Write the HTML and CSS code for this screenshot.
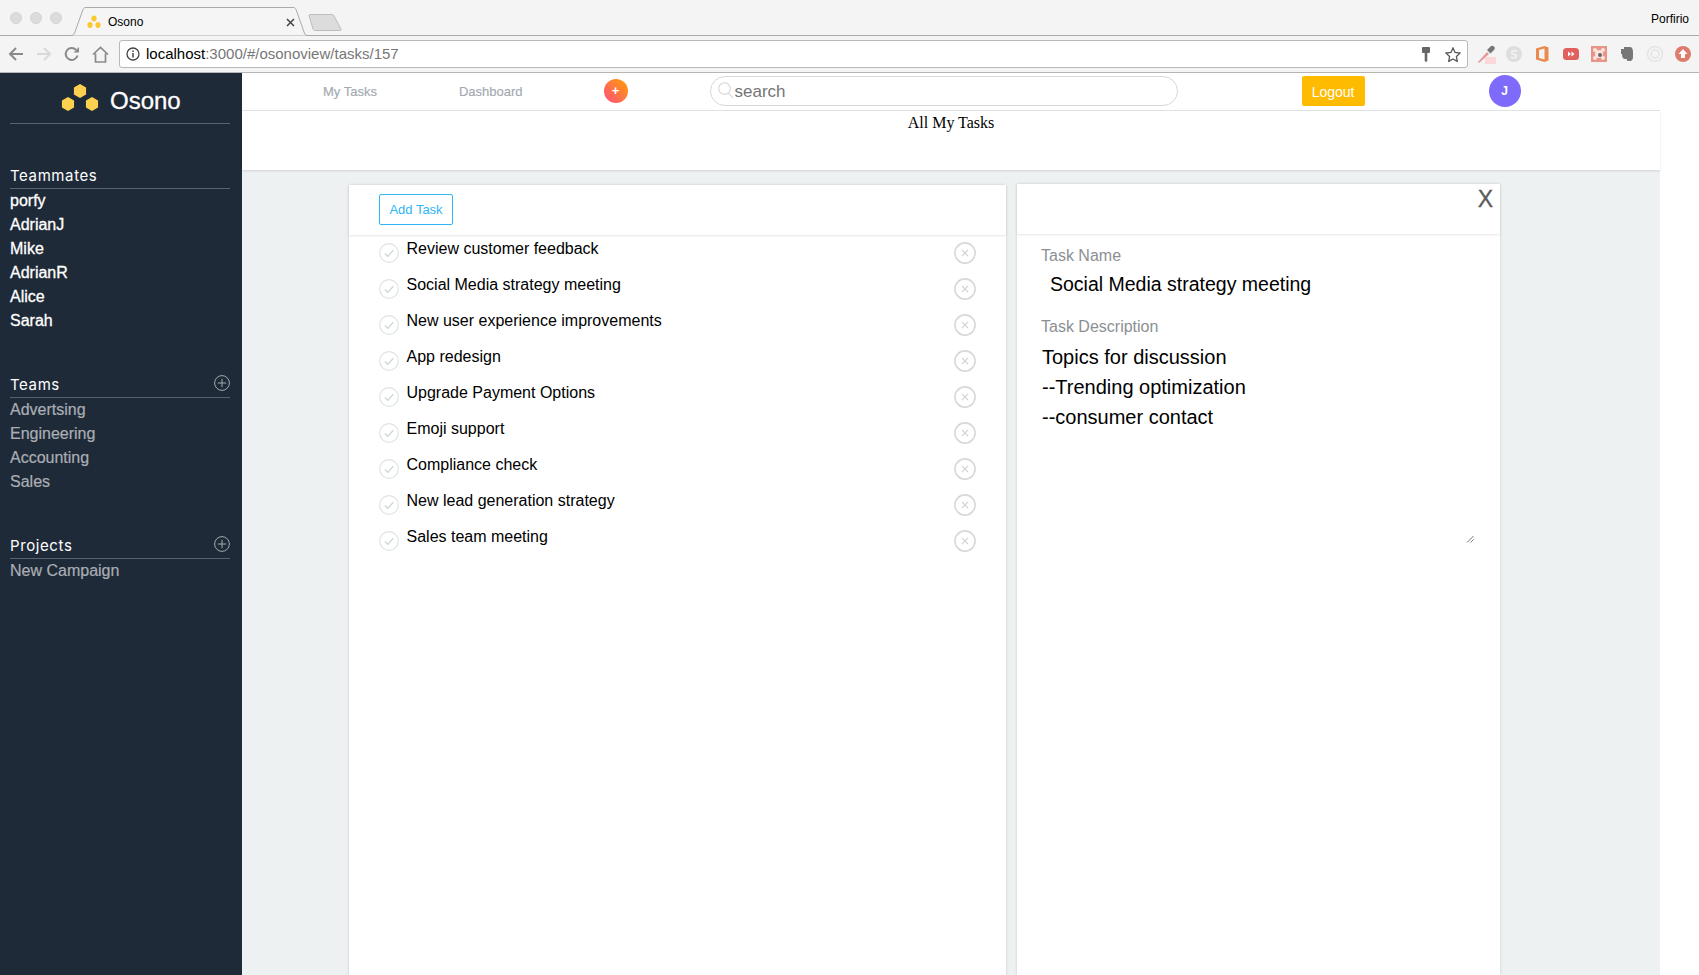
FILE: index.html
```html
<!DOCTYPE html>
<html lang="en">
<head>
<meta charset="utf-8">
<title>Osono</title>
<link rel="stylesheet" href="styles.css">
</head>
<body>
<svg class="defs" width="0" height="0" aria-hidden="true">
  <symbol id="hex" viewBox="0 0 14 15"><path d="M7 0l6.500 3.750v7.500L7 15 .5 11.250v-7.500z"/></symbol>
  <symbol id="check" viewBox="0 0 20 20"><circle cx="10" cy="10" r="9.300" fill="none" stroke="#dde3e6" stroke-width="1.200"/><path d="M5.800 10.400l3 3 5.600-6.200" fill="none" stroke="#c9cfd3" stroke-width="1.100"/></symbol>
  <symbol id="del" viewBox="0 0 22 22"><circle cx="11" cy="11" r="10.100" fill="none" stroke="#d6d9d9" stroke-width="1.600"/><path d="M8 7.800l6 6.400M14 7.800l-6 6.400" fill="none" stroke="#d0d3d4" stroke-width="1.200"/></symbol>
  <symbol id="plus" viewBox="0 0 16 16"><circle cx="8" cy="8" r="7.400" fill="none" stroke="#a5a9af" stroke-width="1"/><path d="M8 3.800v8.400M3.800 8h8.400" stroke="#a5a9af" stroke-width="1"/></symbol>
</svg>

<header class="browser">
  <div class="tabstrip">
    <div class="lights"><i></i><i></i><i></i></div>
    <div class="tab">
      <svg class="tab-shape" width="244" height="29" viewBox="0 0 244 29"><path d="M0 28.500h2c2 0 3-1 3.600-2.500L14 2.500C14.600 1 15.500.5 17 .5h207c1.500 0 2.400.5 3 2l8.400 23.500c.6 1.500 1.600 2.500 3.600 2.500h5" fill="#f5f5f5" stroke="#aaa"/></svg>
      <svg class="tab-icon" width="14" height="14" viewBox="0 0 14 14" fill="#fbc92d"><ellipse cx="7" cy="3.500" rx="2.600" ry="3"/><ellipse cx="3" cy="10" rx="2.600" ry="3"/><ellipse cx="11" cy="10" rx="2.600" ry="3"/></svg>
      <span class="tab-title">Osono</span>
      <svg class="tab-close" width="9" height="9" viewBox="0 0 9 9"><path d="M1 1l7 7M8 1L1 8" stroke="#444" stroke-width="1.500"/></svg>
    </div>
    <svg class="newtab" width="34" height="17" viewBox="0 0 34 17"><path d="M1 1.500C1 1 1.500.5 2 .5h22c1 0 1.500.5 2 1.500l7 13c.3.800 0 1.500-1 1.500H7c-1 0-1.500-.5-2-1.500z" fill="#dcdcdc" stroke="#bdbdbd"/></svg>
    <span class="profile">Porfirio</span>
  </div>
  <div class="toolbar">
    <svg class="tool" width="16" height="16" viewBox="0 0 16 16"><path d="M15 8H2M8 2L2 8l6 6" fill="none" stroke="#8a8a8a" stroke-width="2"/></svg>
    <svg class="tool forward" width="16" height="16" viewBox="0 0 16 16"><path d="M1 8h13M8 2l6 6-6 6" fill="none" stroke="#d9d9d9" stroke-width="2"/></svg>
    <svg class="tool" width="16" height="16" viewBox="0 0 16 16"><path d="M13.500 9.500A6 6 0 1 1 12 3.800" fill="none" stroke="#8a8a8a" stroke-width="2"/><path d="M9.500 6.500H15V1z" fill="#8a8a8a"/></svg>
    <svg class="tool" width="17" height="17" viewBox="0 0 17 17"><path d="M1 8.500l7.500-7 7.500 7M3.500 7.500V16h10V7.500" fill="none" stroke="#8a8a8a" stroke-width="1.700"/></svg>
    <div class="omnibox">
      <svg width="14" height="14" viewBox="0 0 14 14"><circle cx="7" cy="7" r="6" fill="none" stroke="#444" stroke-width="1.300"/><path d="M7 6v4.500M7 3.500v1.500" stroke="#444" stroke-width="1.500"/></svg>
      <span class="url"><b>localhost</b>:3000/#/osonoview/tasks/157</span>
      <svg class="key" width="10" height="15" viewBox="0 0 10 15"><path d="M1 1c0-.5.5-1 1-1h6c.5 0 1 .5 1 1v4c0 .5-.5 1-1 1H6.300v8L5 15l-1.300-1V6H2c-.5 0-1-.5-1-1z" fill="#666"/></svg>
      <svg class="star" width="16" height="15" viewBox="0 0 16 15"><path d="M8 1l2.100 4.500 4.900.6-3.600 3.400.9 4.900L8 11.900l-4.300 2.500.9-4.900L1 6.100l4.900-.6z" fill="none" stroke="#555" stroke-width="1.300"/></svg>
    </div>
    <div class="extensions">
      <svg width="20" height="20" viewBox="0 0 20 20"><path d="M2 18L11 8l2 2-10 9z" fill="#e59a9a"/><path d="M11 6l3.500-3.500c1-1 2.500-1 3.500 0s1 2.500 0 3.500L14.500 9.500z" fill="#777"/><rect x="9" y="13" width="11" height="7" fill="#fbd9d9"/></svg>
      <svg width="18" height="18" viewBox="0 0 18 18"><circle cx="9" cy="9" r="8" fill="#dedede"/><path d="M12 6.500C10 5 6.500 5.500 6.500 7.500s5 1.500 5 3.500-3.500 2.500-5.500 1" fill="none" stroke="#f4f4f4" stroke-width="1.500"/></svg>
      <svg width="15" height="18" viewBox="0 0 15 18"><path d="M1 3.500L9.500 1l4 1.500v13l-4 1.500L1 14.500zM9.500 3.500L4 5v8l5.500 1.500z" fill="#ea8a4c" fill-rule="evenodd"/></svg>
      <svg width="16" height="14" viewBox="0 0 16 14"><rect width="16" height="12" y="1" rx="3.500" fill="#e0605e"/><path d="M5 4.500L8 7l-3 2.500zM8.500 4.500l3 2.500-3 2.500z" fill="#fff"/></svg>
      <svg width="16" height="16" viewBox="0 0 16 16"><rect width="16" height="16" fill="#ea9488"/><circle cx="8" cy="8" r="4" fill="#fbe3df"/><circle cx="4" cy="4" r="2" fill="#fbe3df"/><circle cx="12" cy="4" r="2" fill="#fbe3df"/><circle cx="4" cy="12" r="2" fill="#fbe3df"/><circle cx="12" cy="12" r="2" fill="#fbe3df"/><circle cx="9" cy="9" r="2" fill="#666"/></svg>
      <svg width="14" height="16" viewBox="0 0 14 16"><path d="M1 3h3V1h6c2 0 3 2 3 5v5c0 2-1 4-3 4H8c-1 0-1.500-1-1-2H5C3 13 2 11 2 8H1z" fill="#777"/></svg>
      <svg width="18" height="18" viewBox="0 0 18 18"><circle cx="9" cy="9" r="7.500" fill="none" stroke="#e4e4e4" stroke-width="1.500"/><circle cx="9" cy="9" r="4" fill="none" stroke="#e4e4e4" stroke-width="1.500"/></svg>
      <svg width="16" height="16" viewBox="0 0 16 16"><circle cx="8" cy="8" r="8" fill="#de7c6c"/><path d="M8 3l4.500 5H10v4H6V8H3.500z" fill="#fff"/></svg>
    </div>
  </div>
</header>

<div class="app">
  <aside class="sidebar">
    <div class="brand">
      <svg class="brand-mark" width="38" height="27" viewBox="0 0 38 27" fill="#fdd04f"><use href="#hex" x="12" y="0" width="14" height="14"/><use href="#hex" x="0" y="13" width="14" height="14"/><use href="#hex" x="24" y="13" width="14" height="14"/></svg>
      <span class="brand-name">Osono</span>
    </div>

    <section class="group group-team">
      <h2 class="group-head">Teammates</h2>
      <ul class="group-list list-strong">
        <li>porfy</li><li>AdrianJ</li><li>Mike</li><li>AdrianR</li><li>Alice</li><li>Sarah</li>
      </ul>
    </section>

    <section class="group group-teams">
      <h2 class="group-head">Teams<svg class="add" width="16" height="16"><use href="#plus"/></svg></h2>
      <ul class="group-list">
        <li>Advertsing</li><li>Engineering</li><li>Accounting</li><li>Sales</li>
      </ul>
    </section>

    <section class="group group-projects">
      <h2 class="group-head">Projects<svg class="add" width="16" height="16"><use href="#plus"/></svg></h2>
      <ul class="group-list">
        <li>New Campaign</li>
      </ul>
    </section>
  </aside>

  <main class="main">
    <nav class="topbar">
      <a class="nav-link nav-tasks">My Tasks</a>
      <a class="nav-link nav-dash">Dashboard</a>
      <span class="quick-add">+</span>
      <div class="search">
        <svg width="16" height="17" viewBox="0 0 16 17"><circle cx="6.500" cy="6.500" r="5.800" fill="none" stroke="#d4d4d4" stroke-width="1.100"/><path d="M10.500 11l4.500 5" stroke="#d4d4d4" stroke-width="1.100"/></svg>
        <span class="search-text">search</span>
      </div>
      <button class="logout">Logout</button>
      <span class="avatar">J</span>
    </nav>
    <div class="page-title">All My Tasks</div>
    <div class="content">
      <section class="panel panel-list">
        <div class="panel-head head-list"><button class="add-task">Add Task</button></div>
        <ul class="tasks">
          <li class="task"><svg class="check" width="20" height="20"><use href="#check"/></svg><span class="task-name">Review customer feedback</span><svg class="del" width="22" height="22"><use href="#del"/></svg></li>
          <li class="task"><svg class="check" width="20" height="20"><use href="#check"/></svg><span class="task-name">Social Media strategy meeting</span><svg class="del" width="22" height="22"><use href="#del"/></svg></li>
          <li class="task"><svg class="check" width="20" height="20"><use href="#check"/></svg><span class="task-name">New user experience improvements</span><svg class="del" width="22" height="22"><use href="#del"/></svg></li>
          <li class="task"><svg class="check" width="20" height="20"><use href="#check"/></svg><span class="task-name">App redesign</span><svg class="del" width="22" height="22"><use href="#del"/></svg></li>
          <li class="task"><svg class="check" width="20" height="20"><use href="#check"/></svg><span class="task-name">Upgrade Payment Options</span><svg class="del" width="22" height="22"><use href="#del"/></svg></li>
          <li class="task"><svg class="check" width="20" height="20"><use href="#check"/></svg><span class="task-name">Emoji support</span><svg class="del" width="22" height="22"><use href="#del"/></svg></li>
          <li class="task"><svg class="check" width="20" height="20"><use href="#check"/></svg><span class="task-name">Compliance check</span><svg class="del" width="22" height="22"><use href="#del"/></svg></li>
          <li class="task"><svg class="check" width="20" height="20"><use href="#check"/></svg><span class="task-name">New lead generation strategy</span><svg class="del" width="22" height="22"><use href="#del"/></svg></li>
          <li class="task"><svg class="check" width="20" height="20"><use href="#check"/></svg><span class="task-name">Sales team meeting</span><svg class="del" width="22" height="22"><use href="#del"/></svg></li>
        </ul>
      </section>
      <section class="panel panel-detail">
        <div class="panel-head head-detail"><span class="close">X</span></div>
        <div class="detail">
          <div class="field-label">Task Name</div>
          <div class="field-name">Social Media strategy meeting</div>
          <div class="field-label label-desc">Task Description</div>
          <div class="field-desc">
            <p>Topics for discussion</p>
            <p>--Trending optimization</p>
            <p>--consumer contact</p>
            <svg class="resizer" width="8" height="8" viewBox="0 0 8 8"><path d="M1 7.500L7.500 1M4.500 7.500l3-3" stroke="#777" stroke-width="1"/></svg>
          </div>
        </div>
      </section>
    </div>
  </main>
</div>
</body>
</html>
```

FILE: styles.css
```css
* { box-sizing: border-box; }
html, body { height: 100%; }
body {
  margin: 0;
  height: 975px;
  overflow: hidden;
  display: flex;
  flex-direction: column;
  font-family: "Liberation Sans", Arial, sans-serif;
  color: #000;
  background: #fff;
}
ul { list-style: none; margin: 0; padding: 0; }
p, h2 { margin: 0; }
.defs { position: absolute; }

/* Browser chrome */
.browser { flex: none; height: 73px; background: #f4f4f4; border-bottom: 1px solid #b5b5b5; }
.tabstrip { height: 36px; display: flex; align-items: flex-end; border-bottom: 1px solid #aaa; }
.lights { display: flex; gap: 8px; width: 69px; padding: 0 0 11px 10px; }
.lights i { width: 12px; height: 12px; border-radius: 50%; background: #dcdcdc; border: 1px solid #d4d4d4; }
.tab { position: relative; width: 244px; height: 29px; margin-bottom: -1px; display: flex; align-items: center; padding: 1px 0 0 18px; }
.tab-shape { position: absolute; left: 0; top: 0; }
.tab-icon, .tab-title, .tab-close { position: relative; }
.tab-title { margin-left: 7px; font-size: 12px; }
.tab-close { margin-left: 143px; }
.newtab { margin: 0 0 4px -5px; }
.profile { margin: 0 10px 9px auto; font-size: 12px; }

.toolbar { height: 36px; display: flex; align-items: center; padding-left: 8px; }
.tool { flex: none; margin-right: 12px; }
.omnibox {
  flex: none; width: 1349px; height: 28px; margin-left: -2px;
  display: flex; align-items: center; padding: 0 6px 0 6px;
  background: #fff; border: 1px solid #b9b9b9; border-radius: 3px;
}
.url { margin: 0 0 1px 6px; font-size: 15px; color: #777; }
.url b { font-weight: 400; color: #000; }
.key { margin-left: auto; }
.star { margin-left: 14px; }
.extensions { flex: none; margin-left: 4px; display: grid; grid-template-columns: repeat(8, 28.200px); justify-items: center; align-items: center; }

/* App */
.app { flex: 1; min-height: 0; display: flex; }
.sidebar { flex: none; width: 242px; padding: 0 12px 0 10px; background: #1f2a38; color: #fff; }
.brand { height: 51px; display: flex; align-items: center; padding: 0 0 0 51px; border-bottom: 1px solid #5a626e; }
.brand-mark { margin-bottom: 2px; }
.brand-name { margin: 6px 0 0 11px; font-size: 24px; -webkit-text-stroke: .3px #fff; }
.group-head {
  position: relative; height: 24px; padding-top: 1px;
  font-family: Inter, "Liberation Sans", sans-serif; font-size: 15px; font-weight: 400; line-height: 19px; letter-spacing: .6px;
  border-bottom: 1px solid #5a626e;
}
.add { position: absolute; right: 0; top: 1px; }
.group-list { color: #aaaeb4; font-size: 16px; line-height: 24px; -webkit-text-stroke: .2px #aaaeb4; }
.list-strong { color: #fff; -webkit-text-stroke: .3px #fff; }
.group-team { margin-top: 41px; }
.group-teams { margin-top: 41px; }
.group-projects { margin-top: 41px; }

.main { flex: none; width: 1418px; display: flex; flex-direction: column; background: #edf1f2; }
.topbar { flex: none; height: 38px; padding-bottom: 2px; display: flex; align-items: center; background: #fff; border-bottom: 1px solid #dfe4e5; }
.nav-link { margin-top: 2px; font-size: 13px; color: #a3a9b1; -webkit-text-stroke: .15px #a3a9b1; }
.nav-tasks { margin-left: 81px; }
.nav-dash { margin-left: 82px; }
.quick-add {
  width: 24px; height: 24px; margin-left: 81px;
  display: flex; align-items: center; justify-content: center;
  border-radius: 50%; color: #fff; font-size: 13px; font-weight: 700;
  background: linear-gradient(45deg, #ff4b83, #ffa200);
}
.search {
  flex: none; width: 468px; height: 30px; margin-left: 82px; padding-left: 7px;
  display: flex; align-items: center; gap: 1px;
  border: 1px solid #d8d8d8; border-radius: 15px; font-size: 17px; color: #757575;
}
.search-text { padding-top: 2px; }
.logout {
  flex: none; width: 63px; height: 30px; margin-left: 124px; padding: 3px 0 0;
  border: 0; border-radius: 2px; background: #ffbb00; color: #fff;
  font: 14px "Liberation Sans", Arial, sans-serif;
}
.avatar {
  flex: none; width: 32px; height: 32px; margin-left: 124px;
  display: flex; align-items: center; justify-content: center;
  border-radius: 50%; background: #7e6bfb; color: #fff; font-size: 12px; font-weight: 700;
}
.page-title {
  flex: none; height: 59px; padding-top: 3px; text-align: center;
  font-family: "Liberation Serif", "Times New Roman", serif; font-size: 16px; line-height: 18px;
  background: #fff; box-shadow: 0 1px 2px rgba(0, 0, 0, .12);
}
.content { flex: 1; min-height: 0; display: flex; gap: 11px; padding: 15px 0 0 107px; }
.panel { background: #fff; box-shadow: 0 0 3px rgba(0, 0, 0, .15); }
.panel-list { width: 657px; }
.panel-detail { width: 483px; margin-top: -1px; }
.panel-head { box-shadow: 0 1px 2px rgba(0, 0, 0, .1); }
.head-list { height: 50px; padding: 9px 0 0 30px; }
.head-detail { height: 50px; display: flex; justify-content: flex-end; }
.add-task {
  width: 74px; height: 31px; padding: 0;
  background: #fff; border: 1px solid #30b5f5; border-radius: 2px;
  color: #30b5f5; font: 13px "Liberation Sans", Arial, sans-serif;
}
.close { margin: 2px 7px 0 0; font-size: 23px; line-height: 27px; color: #5a5a5a; -webkit-text-stroke: .3px #5a5a5a; }
.task { height: 36px; display: flex; align-items: center; padding: 0 30px; }
.task-name { flex: 1; margin: 0 0 8px 7.500px; font-size: 16px; }
.check, .del { flex: none; }
.detail { padding: 12px 22px 0 24px; }
.field-label { font-size: 16px; line-height: 20px; color: #8b8f94; }
.field-name { margin-top: 6px; padding-left: 9px; font-size: 19.500px; line-height: 24px; }
.label-desc { margin-top: 21px; }
.field-desc { position: relative; height: 201px; margin-top: 4.500px; padding-left: 1px; font-size: 20px; line-height: 30px; }
.resizer { position: absolute; right: 4px; bottom: 0; }
```
